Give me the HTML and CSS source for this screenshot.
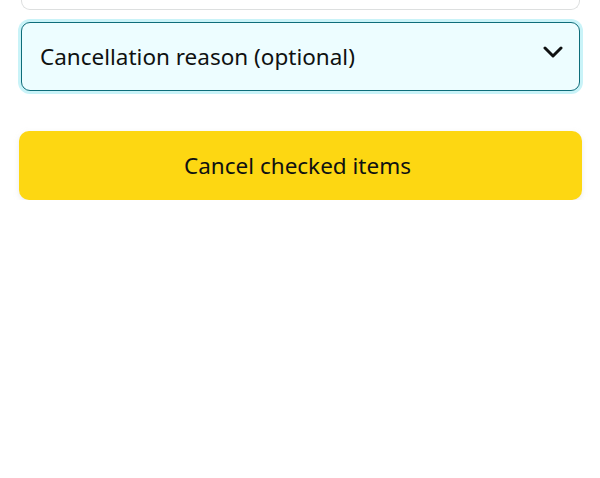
FILE: index.html
```html
<!DOCTYPE html>
<html lang="en">
<head>
<meta charset="utf-8">
<title>Cancel items</title>
<link rel="stylesheet" href="styles.css">
</head>
<body>
<div class="page">
  <div class="prev-field"></div>
  <div class="select">
    <span class="select-label">Cancellation reason (optional)</span>
    <svg class="chevron" width="20" height="12" viewBox="0 0 20 12" aria-hidden="true">
      <path d="M2 2 L10 10 L18 2" fill="none" stroke="#0F1111" stroke-width="3" stroke-linecap="round" stroke-linejoin="round"/>
    </svg>
  </div>
  <button class="cancel-btn" type="button">Cancel checked items</button>
</div>
</body>
</html>
```
FILE: styles.css
```css
html, body {
  margin: 0;
  padding: 0;
  background: #ffffff;
}
body {
  font-family: "Noto Sans", "Open Sans", "Liberation Sans", sans-serif;
  color: #0F1111;
}
.page {
  display: flex;
  flex-direction: column;
  padding: 0 18px 0 19px;
}
.prev-field {
  margin: 0 2px;
  height: 9px;
  border: 1px solid #DDDFDF;
  border-top: none;
  border-radius: 0 0 9px 9px;
  background: #fff;
}
.select {
  margin: 12px 2px 0;
  height: 67px;
  border: 1px solid #0E6D7A;
  border-radius: 9px;
  background: #EDFDFF;
  box-shadow: 0 0 0 3px #C9F3F8;
  display: flex;
  align-items: center;
  justify-content: space-between;
  padding: 0 16px 0 18px;
}
.select-label {
  font-size: 22.5px;
  line-height: 1;
  padding-top: 2px;
}
.chevron {
  display: block;
  margin-top: -9px;
}
.cancel-btn {
  margin-top: 40px;
  height: 69px;
  border: none;
  border-radius: 10px;
  background: #FDD712;
  box-shadow: 0 2px 5px rgba(213, 217, 217, 0.5);
  font-family: inherit;
  font-size: 22.5px;
  color: #0F1111;
  padding: 0 6px 0 0;
  cursor: pointer;
}
```
